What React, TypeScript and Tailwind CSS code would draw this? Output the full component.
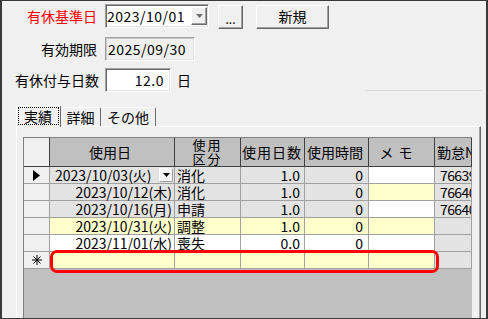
const GRAY = "bg-[#e3e3e3]"
const YELLOW = "bg-[#ffffcc]"
const WHITE = "bg-white"

type Row = {
  date: string
  kubun: string
  days: string
  time: string
  no: string
  main: string
  memo: string
}

const rows: Row[] = [
  { date: "2023/10/03(火)", kubun: "消化", days: "1.0", time: "0", no: "76639", main: GRAY, memo: WHITE },
  { date: "2023/10/12(木)", kubun: "消化", days: "1.0", time: "0", no: "76640", main: GRAY, memo: YELLOW },
  { date: "2023/10/16(月)", kubun: "申請", days: "1.0", time: "0", no: "76640", main: GRAY, memo: WHITE },
  { date: "2023/10/31(火)", kubun: "調整", days: "1.0", time: "0", no: "", main: YELLOW, memo: YELLOW },
  { date: "2023/11/01(水)", kubun: "喪失", days: "0.0", time: "0", no: "", main: WHITE, memo: WHITE },
]

const sunken =
  "border border-t-[#a0a0a0] border-l-[#a0a0a0] border-b-white border-r-white shadow-[inset_1px_1px_0_#696969,inset_-1px_-1px_0_#e3e3e3]"
const raised =
  "border border-t-white border-l-white border-b-[#696969] border-r-[#696969] shadow-[inset_-1px_-1px_0_#a0a0a0] bg-[#f0f0f0]"
const cell = "h-[17px] border-r border-b border-[#a0a0a0] flex items-center whitespace-nowrap leading-[15px]"
const head = "h-[29px] border-r border-b border-[#404040] bg-[#c0c0c0] flex items-center whitespace-nowrap"

function DownArrow({ color }: { color: string }) {
  return (
    <svg width="7" height="4" viewBox="0 0 7 4">
      <polygon points="0,0 7,0 3.5,4" fill={color} />
    </svg>
  )
}

export default function App() {
  return (
    <div className="relative h-[319px] w-[488px] overflow-hidden border-t border-b border-l-2 border-r-2 border-[#3a3a3a] bg-[#f0f0f0] font-['Noto_Sans_CJK_JP',sans-serif] text-[14px] text-black">
      {/* 有休基準日 */}
      <div className="mt-[3px] flex h-[24px] items-start">
        <div className="w-[95px] self-center text-right text-[#ff0000]">有休基準日</div>
        <div className={`ml-[8px] flex h-[24px] w-[104px] items-center bg-white ${sunken}`}>
          <span className="flex-1 pl-[1px] tracking-[0.5px]">2023/10/01</span>
          <div className={`mr-px flex h-[18px] w-[16px] items-center justify-center ${raised}`}>
            <DownArrow color="#707070" />
          </div>
        </div>
        <button className={`ml-[9px] mt-px flex h-[24px] w-[25px] items-end justify-center pb-[3px] text-[12px] leading-none ${raised}`}>
          ...
        </button>
        <button className={`ml-[13px] mt-px flex h-[24px] w-[73px] items-center justify-center pb-[2px] ${raised}`}>
          新規
        </button>
      </div>

      {/* 有効期限 */}
      <div className="mt-[9px] flex h-[24px] items-center">
        <div className="w-[95px] text-right">有効期限</div>
        <div className="ml-[8px] flex h-[24px] w-[90px] items-center border border-t-[#a0a0a0] border-l-[#a0a0a0] border-b-white border-r-white bg-[#f0f0f0] pl-[2px] tracking-[0.5px] shadow-[inset_1px_1px_0_#c8c8c8,inset_-1px_-1px_0_#e3e3e3]">
          2025/09/30
        </div>
      </div>

      {/* 有休付与日数 */}
      <div className="mt-[7px] flex h-[24px] items-center">
        <div className="w-[97px] text-right">有休付与日数</div>
        <div className={`ml-[6px] flex h-[24px] w-[66px] items-center justify-end bg-white pr-[6px] tracking-[0.5px] ${sunken}`}>
          12.0
        </div>
        <span className="ml-[6px]">日</span>
        <div className="mr-[4px] mb-px ml-auto h-px w-[117px] self-end bg-[#dcdcdc]" />
      </div>

      {/* tabs */}
      <div className="relative z-10 mt-[13px] ml-[14px] -mb-px flex h-[22px] items-end">
        <div className="flex h-[22px] w-[45px] items-start justify-center rounded-t-[2px] border-l border-t border-r border-l-white border-t-white border-r-[#696969] bg-[#f0f0f0] pt-px pr-px">
          <div className="flex h-[18px] w-[41px] items-center justify-center border border-dotted border-black leading-[16px]">
            実績
          </div>
        </div>
        <div className="mb-px flex h-[19px] w-[40px] items-center justify-center rounded-t-[2px] border-t border-r border-t-white border-r-[#696969] leading-[16px]">
          詳細
        </div>
        <div className="mb-px flex h-[19px] w-[55px] items-center justify-center rounded-t-[2px] border-t border-r border-t-white border-r-[#696969] leading-[16px]">
          その他
        </div>
      </div>

      {/* tab page */}
      <div className="ml-[14px] h-[200px] w-[465px] border-l border-t border-r border-l-white border-t-white border-r-[#696969] pl-[6px] pt-[10px] shadow-[inset_-1px_0_0_#a0a0a0]">
        <div className="relative h-[190px] w-[449px] overflow-hidden border-l border-t border-[#808080] bg-[#c0c0c0]">
          <div className="grid grid-cols-[26px_125px_66px_64px_64px_66px_37px]">
            {/* header */}
            <div className={`${head} bg-[#f0f0f0]`} />
            <div className={`${head} justify-center pr-[4px]`}>使用日</div>
            <div className={`${head} flex-col justify-center text-[13px] leading-[14px] tracking-[2px]`}>
              <span>使用</span>
              <span>区分</span>
            </div>
            <div className={`${head} pl-[1px] tracking-[1px]`}>使用日数</div>
            <div className={`${head} pl-[2px]`}>使用時間</div>
            <div className={`${head} justify-center pr-[6px] tracking-[5px]`}>メモ</div>
            <div className={`${head} overflow-hidden pl-[2px]`}>勤怠No</div>

            {/* rows */}
            {rows.map((r, i) => (
              <div key={i} className="contents">
                <div className={`${cell} justify-center bg-[#f0f0f0]`}>
                  {i === 0 && (
                    <svg width="7" height="11" viewBox="0 0 7 11">
                      <polygon points="0,0 7,5.5 0,11" fill="#000" />
                    </svg>
                  )}
                </div>
                {i === 0 ? (
                  <div className={`${cell} ${r.main} pl-[5px]`}>
                    <span className="flex-1">{r.date}</span>
                    <div className="mr-px flex h-[14px] w-[14px] items-center justify-center border border-t-white border-l-white border-b-[#a0a0a0] border-r-[#a0a0a0] bg-[#f4f4f4]">
                      <DownArrow color="#000" />
                    </div>
                  </div>
                ) : (
                  <div className={`${cell} ${r.main} justify-end pr-[2px]`}>{r.date}</div>
                )}
                <div className={`${cell} ${r.main} pl-[2px]`}>{r.kubun}</div>
                <div className={`${cell} ${r.main} justify-end pr-[4px]`}>{r.days}</div>
                <div className={`${cell} ${r.main} justify-end pr-[5px]`}>{r.time}</div>
                <div className={`${cell} ${r.memo}`} />
                <div className={`${cell} ${GRAY} overflow-hidden pl-[5px] tracking-[-0.6px]`}>{r.no}</div>
              </div>
            ))}

            {/* new row */}
            <div className={`${cell} justify-center bg-[#f0f0f0]`}>
              <svg width="10" height="10" viewBox="0 0 10 10" stroke="#000" strokeWidth="1">
                <line x1="5" y1="0" x2="5" y2="10" />
                <line x1="0" y1="5" x2="10" y2="5" />
                <line x1="1.5" y1="1.5" x2="8.5" y2="8.5" />
                <line x1="8.5" y1="1.5" x2="1.5" y2="8.5" />
              </svg>
            </div>
            <div className={`${cell} ${YELLOW}`} />
            <div className={`${cell} ${YELLOW}`} />
            <div className={`${cell} ${YELLOW}`} />
            <div className={`${cell} ${YELLOW}`} />
            <div className={`${cell} ${YELLOW}`} />
            <div className={`${cell} ${GRAY}`} />
          </div>

          {/* highlight */}
          <div className="pointer-events-none absolute left-[26px] top-[112px] h-[23px] w-[389px] rounded-[7px] border-[3px] border-[#ff0000]" />
        </div>
      </div>
    </div>
  )
}
